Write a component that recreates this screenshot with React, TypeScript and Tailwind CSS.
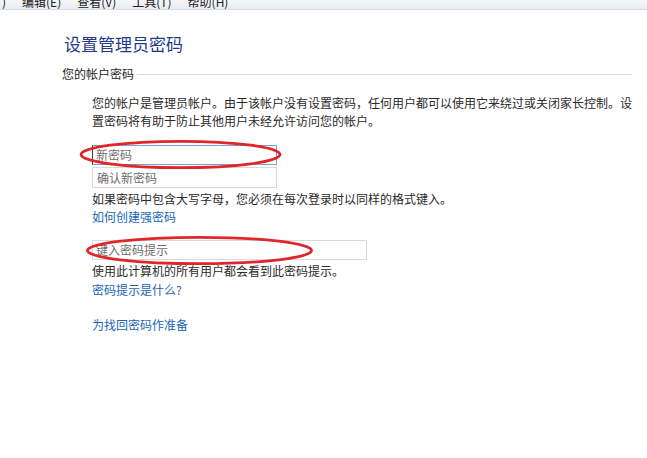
import React from "react";

const menus = [")", "编辑(E)", "查看(V)", "工具(T)", "帮助(H)"];

function Ellipse({ className }: { className: string }) {
  return (
    <svg className={`absolute pointer-events-none ${className}`} viewBox="0 0 200 40" preserveAspectRatio="none">
      <ellipse cx="100" cy="20" rx="97" ry="16" fill="none" stroke="#e0262b" strokeWidth="2.8" vectorEffect="non-scaling-stroke" />
    </svg>
  );
}

export default function App() {
  return (
    <div
      className="relative w-[647px] h-[458px] overflow-hidden bg-white text-[12px] text-[#1e1e1e]"
      style={{ fontFamily: '"Microsoft YaHei", "Noto Sans CJK SC", sans-serif' }}
    >
      {/* Menu bar (cut off at the top) */}
      <div className="h-[10px] overflow-hidden bg-gradient-to-b from-[#f5f6f8] to-[#e8ecf2] border-b border-[#d7dde6]">
        <div className="flex gap-[16px] pl-[2px] -mt-[7px] text-[12px] leading-[17px] text-[#222]">
          {menus.map((m) => (
            <span key={m}>{m}</span>
          ))}
        </div>
      </div>

      <div className="pl-[62px] pr-[10px]">
        <h1 className="mt-[23px] pl-[2px] text-[17px] leading-[22px] text-[#1e3a8a]">设置管理员密码</h1>

        {/* Section header */}
        <div className="mt-[10px] flex items-center gap-[3px] pr-[5px]">
          <span className="leading-[18px]">您的帐户密码</span>
          <div className="flex-1 h-px bg-[#d9d9d9]" />
        </div>

        <div className="pl-[30px]">
          <p className="mt-[11px] leading-[18px] text-[#2a2a2a]">
            您的帐户是管理员帐户。由于该帐户没有设置密码，任何用户都可以使用它来绕过或关闭家长控制。设置密码将有助于防止其他用户未经允许访问您的帐户。
          </p>

          <div className="mt-[15px] flex flex-col gap-[2px]">
            <div className="w-[185px] h-[20px] border border-[#7da2ce] border-l-[#3c3c3c] flex items-center pl-[3px] text-[#6d6d6d]">
              新密码
            </div>
            <div className="w-[185px] h-[21px] border border-[#d9d9d9] flex items-center pl-[4px] text-[#6d6d6d]">
              确认新密码
            </div>
          </div>

          <p className="mt-[2px] leading-[18px] text-[#2a2a2a]">如果密码中包含大写字母，您必须在每次登录时以同样的格式键入。</p>
          <a className="block leading-[17px] text-[#1a66b8]">如何创建强密码</a>

          <div className="mt-[15px] w-[275px] h-[20px] border border-[#d9d9d9] flex items-center pl-[3px] text-[#6d6d6d]">
            键入密码提示
          </div>
          <p className="mt-[1px] leading-[19px] text-[#2a2a2a]">使用此计算机的所有用户都会看到此密码提示。</p>
          <a className="block leading-[19px] text-[#1a66b8]">密码提示是什么?</a>

          <a className="block mt-[17px] leading-[18px] text-[#1a66b8]">为找回密码作准备</a>
        </div>
      </div>

      <Ellipse className="left-[78px] top-[138px] w-[205px] h-[33px]" />
      <Ellipse className="left-[84px] top-[234px] w-[231px] h-[33px]" />
    </div>
  );
}
